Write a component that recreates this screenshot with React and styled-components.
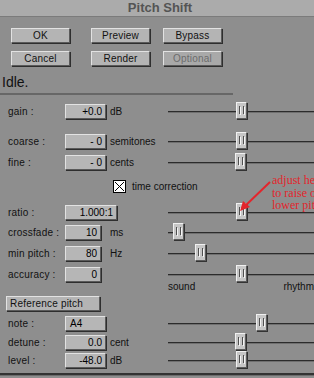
import React from "react";
import styled, { createGlobalStyle } from "styled-components";

const Global = createGlobalStyle`
  html, body { margin: 0; padding: 0; background: #8e8e8e; overflow: hidden; }
  body { font-family: "Liberation Sans", Arial, sans-serif; }
`;

const Window = styled.div`
  position: relative;
  width: 314px;
  height: 378px;
  background: #8e8e8e;
  overflow: hidden;
  display: flex;
  flex-direction: column;
  font-size: 10px;
  color: #111;
`;

const TitleBar = styled.div`
  height: 16px;
  line-height: 16px;
  background: #ababab;
  border-bottom: 1px solid #7b7b7b;
  text-align: center;
  font-size: 13px;
  font-weight: bold;
  color: #545454;
  padding-left: 6px;
`;

const ButtonGrid = styled.div`
  display: grid;
  grid-template-columns: 80px 72px 59px;
  row-gap: 8px;
  padding-left: 11px;
  margin-top: 11px;
`;

const Bevel = styled.div`
  box-sizing: border-box;
  height: 15px;
  background: #b4b4b4;
  border: 1px solid;
  border-color: #e2e2e2 #5a5a5a #5a5a5a #e2e2e2;
  box-shadow: 1px 1px 0 #2e2e2e;
  line-height: 13px;
  font-size: 10px;
  white-space: nowrap;
`;

const Button = styled(Bevel)`
  width: 59px;
  text-align: center;
  letter-spacing: 0.2px;
  color: ${(p) => (p.$disabled ? "#6c6c6c" : "#111")};
  background: ${(p) => (p.$disabled ? "#a9a9a9" : "#b4b4b4")};
`;

const Status = styled.div`
  margin-top: 8px;
  width: 231px;
  padding: 0 0 3px 2px;
  font-size: 14px;
  line-height: 16px;
  color: #111;
  border-bottom: 2px solid #676767;
`;

const Row = styled.div`
  display: grid;
  grid-template-columns: 57px 45px 58px 1fr;
  align-items: center;
  height: 16px;
  margin-top: ${(p) => p.$mt}px;
  padding-left: 8px;
`;

const Label = styled.span`
  letter-spacing: 0.2px;
  white-space: nowrap;
`;

const Field = styled(Bevel)`
  width: ${(p) => p.$w}px;
  text-align: ${(p) => (p.$left ? "left" : "right")};
  padding: ${(p) => (p.$left ? "0 0 0 4px" : "0 3px 0 0")};
  background: #b6b6b6;
  color: #000;
  overflow: visible;
`;

const Unit = styled.span`
  white-space: nowrap;
`;

const Track = styled.div`
  position: relative;
  height: 16px;
  &::before {
    content: "";
    position: absolute;
    left: 0;
    right: 0;
    top: 8px;
    height: 1px;
    background: #2b2b2b;
    box-shadow: 0 1px 0 #6f6f6f;
  }
`;

const Thumb = styled.div`
  position: absolute;
  top: -1px;
  left: ${(p) => p.$pos}px;
  box-sizing: border-box;
  width: 11px;
  height: 17px;
  background: #c6c6c6;
  border: 1px solid;
  border-color: #f0f0f0 #5c5c5c #5c5c5c #f0f0f0;
  box-shadow: 1px 1px 0 #333;
  &::before {
    content: "";
    position: absolute;
    left: 2px;
    top: 3px;
    width: 3px;
    height: 8px;
    border-left: 1px solid #505050;
    border-right: 1px solid #505050;
  }
  &::after {
    content: "";
    position: absolute;
    left: 3px;
    top: 4px;
    width: 3px;
    height: 8px;
    border-left: 1px solid #f4f4f4;
    border-right: 1px solid #f4f4f4;
  }
`;

const CheckRow = styled.div`
  display: flex;
  align-items: center;
  gap: 6px;
  height: 13px;
  margin-top: 10px;
  padding-left: 113px;
  white-space: nowrap;
`;

const Box = styled.div`
  box-sizing: border-box;
  width: 13px;
  height: 13px;
  background: #fff;
  border: 1px solid #000;
  display: flex;
`;

const ScaleRow = styled.div`
  display: flex;
  justify-content: space-between;
  width: 146px;
  margin: -1px 0 0 168px;
  height: 11px;
  line-height: 11px;
`;

const RefRow = styled.div`
  margin-top: 4px;
  padding-left: 6px;
`;

const RefButton = styled(Bevel)`
  width: 94px;
  padding-left: 3px;
  letter-spacing: 0.2px;
`;

const BottomRule = styled.div`
  margin-top: 5px;
  height: 2px;
  background: #333;
  border-bottom: 1px solid #6c6c6c;
`;

const Note = styled.div`
  position: absolute;
  left: 272px;
  top: 174px;
  font-family: "Liberation Serif", "Times New Roman", serif;
  font-size: 12px;
  line-height: 12.5px;
  color: #e3252c;
  white-space: nowrap;
`;

const ArrowSvg = styled.svg`
  position: absolute;
  left: 236px;
  top: 178px;
`;

function Slider({ pos }) {
  return (
    <Track>
      <Thumb $pos={pos} />
    </Track>
  );
}

function ParamRow({ mt, label, value, w = 41, unit, pos, left }) {
  return (
    <Row $mt={mt}>
      <Label>{label}</Label>
      <Field $w={w} $left={left}>{value}</Field>
      <Unit>{unit}</Unit>
      <Slider pos={pos} />
    </Row>
  );
}

export default function App() {
  return (
    <>
      <Global />
      <Window>
        <TitleBar>Pitch Shift</TitleBar>
        <ButtonGrid>
          <Button>OK</Button>
          <Button>Preview</Button>
          <Button>Bypass</Button>
          <Button>Cancel</Button>
          <Button>Render</Button>
          <Button $disabled>Optional</Button>
        </ButtonGrid>
        <Status>Idle.</Status>

        <ParamRow mt={8} label="gain :" value="+0.0" unit="dB" pos={68} />
        <ParamRow mt={14} label="coarse :" value="- 0" unit="semitones" pos={68} />
        <ParamRow mt={5} label="fine :" value="- 0" unit="cents" pos={67} />

        <CheckRow>
          <Box>
            <svg width="11" height="11" viewBox="0 0 11 11">
              <path d="M1 1 L10 10 M10 1 L1 10" stroke="#000" strokeWidth="1" fill="none" />
            </svg>
          </Box>
          <span>time correction</span>
        </CheckRow>

        <ParamRow mt={11} label="ratio :" value="1.000:1" w={52} unit="" pos={68} />
        <ParamRow mt={4} label="crossfade :" value="10" w={36} unit="ms" pos={5} />
        <ParamRow mt={5} label="min pitch :" value="80" w={36} unit="Hz" pos={27} />
        <ParamRow mt={5} label="accuracy :" value="0" w={36} unit="" pos={68} />

        <ScaleRow>
          <span>sound</span>
          <span>rhythm</span>
        </ScaleRow>

        <RefRow>
          <RefButton>Reference pitch</RefButton>
        </RefRow>

        <ParamRow mt={4} label="note :" value="A4" left unit="" pos={88} />
        <ParamRow mt={3} label="detune :" value="0.0" unit="cent" pos={67} />
        <ParamRow mt={2} label="level :" value="-48.0" unit="dB" pos={68} />

        <BottomRule />

        <Note>
          adjust here
          <br />
          to raise or
          <br />
          lower pitch
        </Note>
        <ArrowSvg width="40" height="36" viewBox="0 0 40 36">
          <path d="M34 4 L8 29" stroke="#e3252c" strokeWidth="2" fill="none" />
          <path d="M4 33 L7 23 L14 29 Z" fill="#e3252c" />
        </ArrowSvg>
      </Window>
    </>
  );
}
